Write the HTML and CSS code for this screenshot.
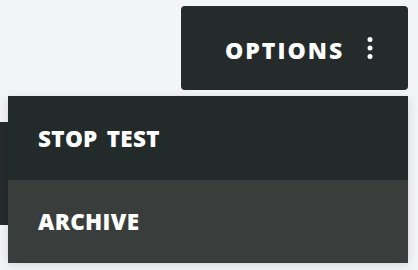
FILE: index.html
```html
<!DOCTYPE html>
<html lang="en">
<head>
    <meta charset="UTF-8">
    <meta name="viewport" content="width=device-width, initial-scale=1.0">
    <title>Options</title>
    <link rel="stylesheet" href="styles.css">
</head>
<body>
    <div class="page">
        <div class="toolbar">
            <div class="options-wrap">
                <button class="options-btn" type="button">
                    <span class="options-label">OPTIONS</span>
                    <svg class="kebab" width="6" height="22" viewBox="0 0 6 22">
                        <circle cx="3" cy="2.6" r="2.5" fill="#fff"/>
                        <circle cx="3" cy="11" r="2.5" fill="#fff"/>
                        <circle cx="3" cy="19.4" r="2.5" fill="#fff"/>
                    </svg>
                </button>

                <!-- dropdown -->
                <ul class="menu">
                    <li class="menu-item">STOP TEST</li>
                    <li class="menu-item active">ARCHIVE</li>
                </ul>
            </div>
        </div>

        <div class="panel"></div>
    </div>
</body>
</html>
```

FILE: styles.css
```css
* {
    margin: 0;
    padding: 0;
    box-sizing: border-box;
}

body {
    font-family: 'Open Sans', 'Liberation Sans', sans-serif;
    background: #f3f4f6;
    color: #fff;
    height: 270px;
    overflow: hidden;
}

.page {
    padding-top: 6px;
}

.toolbar {
    display: flex;
    justify-content: flex-end;
    padding-right: 10px;
}

.options-wrap {
    position: relative;
}

.options-btn {
    display: flex;
    align-items: center;
    gap: 23px;
    width: 227px;
    height: 84px;
    padding: 4px 0 0 44px;
    background: #242b2a;
    border: none;
    border-radius: 4px;
    color: #fff;
    font-family: inherit;
    font-size: 23px;
    font-weight: 800;
    letter-spacing: 2px;
    cursor: pointer;
}

.kebab {
    margin-top: -4px;
}

.menu {
    position: absolute;
    top: 90px;
    right: 0;
    width: 400px;
    list-style: none;
    box-shadow: 0 2px 10px rgba(0, 0, 0, 0.12);
    z-index: 10;
}

.menu-item {
    display: flex;
    align-items: center;
    height: 84px;
    padding-left: 30px;
    background: #232b2a;
    font-size: 22.5px;
    font-weight: 800;
    letter-spacing: 0.3px;
    word-spacing: 3px;
}

.menu-item.active {
    height: 83px;
    background: #393e3c;
}

.panel {
    width: 300px;
    height: 103px;
    margin-top: 32px;
    background: #242b2a;
}
```
